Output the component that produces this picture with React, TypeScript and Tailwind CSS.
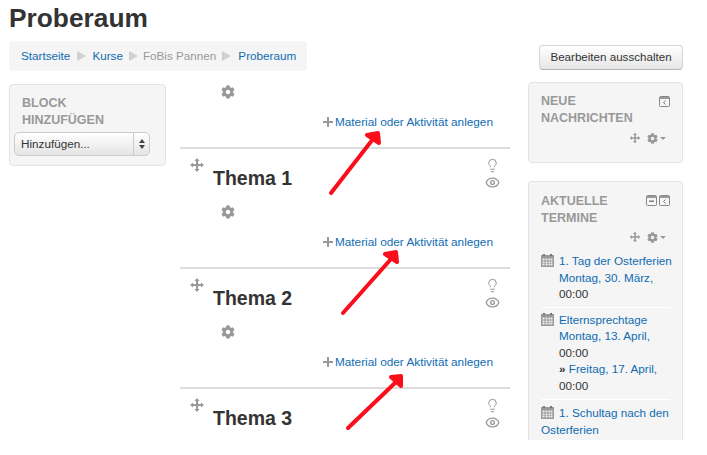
import { Eye, Lightbulb } from 'lucide-react'
import { FaCog } from 'react-icons/fa'

function MoveIcon({ className = '' }: { className?: string }) {
  return (
    <svg viewBox="0 0 14 14" className={`w-[14px] h-[14px] ${className}`} fill="#999">
      <path d="M7 0 9.6 3H8v3h3V4.4L14 7l-3 2.6V8H8v3h1.6L7 14l-2.6-3H6V8H3v1.6L0 7l3-2.6V6h3V3H4.4z" />
    </svg>
  )
}

function PlusIcon() {
  return (
    <svg viewBox="0 0 10 10" className="w-[10px] h-[10px]" fill="#999">
      <path d="M4 0h2v4h4v2H6v4H4V6H0V4h4z" />
    </svg>
  )
}

function CalendarIcon() {
  return (
    <svg viewBox="0 0 13 13" className="w-[13px] h-[13px] shrink-0" fill="none">
      <rect x="0" y="1" width="13" height="12" fill="#999" />
      <rect x="2" y="0" width="2" height="2" fill="#777" />
      <rect x="9" y="0" width="2" height="2" fill="#777" />
      <path d="M1.5 4.5h2v2h-2zM4.5 4.5h2v2h-2zM7.5 4.5h2v2h-2zM10 4.5h1.5v2H10zM1.5 7.5h2v2h-2zM4.5 7.5h2v2h-2zM7.5 7.5h2v2h-2zM10 7.5h1.5v2H10zM1.5 10h2v1.5h-2zM4.5 10h2v1.5h-2zM7.5 10h2v1.5h-2zM10 10h1.5v1.5H10z" fill="#eee" />
    </svg>
  )
}

function DockIcon() {
  return (
    <svg viewBox="0 0 11 11" className="w-[11px] h-[11px]" fill="none">
      <rect x="0.5" y="0.5" width="10" height="10" rx="1" stroke="#888" />
      <rect x="1" y="1" width="9" height="2" fill="#999" />
      <path d="M6.5 4.5 4.5 6.5l2 2" stroke="#777" />
    </svg>
  )
}

function MinusBoxIcon() {
  return (
    <svg viewBox="0 0 11 11" className="w-[11px] h-[11px]" fill="none">
      <rect x="0.5" y="0.5" width="10" height="10" rx="1" stroke="#888" />
      <rect x="1" y="1" width="9" height="2" fill="#999" />
      <rect x="3" y="5.5" width="5" height="1.4" fill="#777" />
    </svg>
  )
}

function AddActivity() {
  return (
    <div className="flex items-center justify-end gap-[2px] pr-[17px] h-[18px]">
      <PlusIcon />
      <a className="text-[11.8px] text-[#0f6cb2] leading-[18px] whitespace-nowrap">Material oder Aktivität anlegen</a>
    </div>
  )
}

function Section({ title, last = false }: { title: string; last?: boolean }) {
  return (
    <section className="border-t-2 border-[#dddddd] h-[120px]">
      <div className="flex justify-between pl-[10px] pr-[10px] pt-[9px]">
        <MoveIcon />
        <div className="flex flex-col items-center gap-[2px]">
          <Lightbulb size={15} strokeWidth={1.6} color="#999" />
          <Eye size={15} strokeWidth={2.2} color="#999" />
        </div>
      </div>
      <h3 className="text-[19.5px] font-bold text-[#333] leading-[24px] pl-[33px] -mt-[24px]">{title}</h3>
      {!last && (
        <>
          <div className="pl-[41px] mt-[15px]">
            <FaCog size={14} color="#999" />
          </div>
          <div className="mt-[14px]">
            <AddActivity />
          </div>
        </>
      )}
    </section>
  )
}

function BlockControls() {
  return (
    <div className="flex justify-end items-center gap-[5px] pr-[4px] mt-[4px]">
      <MoveIcon className="scale-[0.75]" />
      <div className="flex items-center gap-[2px]">
        <FaCog size={11} color="#999" />
        <span className="border-x-[3px] border-t-[3px] border-x-transparent border-t-[#999]" />
      </div>
    </div>
  )
}

export default function App() {
  return (
    <div className="relative w-[707px] h-[455px] overflow-hidden bg-white pl-[9px] pr-[24px] font-['Liberation_Sans',Arial,sans-serif]">
      <h1 className="text-[26.3px] font-bold text-[#333] leading-[36px]">Proberaum</h1>

      <div className="flex justify-between items-start mt-[5px]">
        <nav className="flex items-center w-[298px] h-[30px] px-[12px] bg-[#f5f5f5] rounded-[3px] text-[11.7px] whitespace-nowrap">
          <a className="text-[#0f6cb2]">Startseite</a>
          <span className="ml-[7px] mr-[6px] border-y-[5px] border-l-[9px] border-y-transparent border-l-[#d0d0d0]" />
          <a className="text-[#0f6cb2]">Kurse</a>
          <span className="ml-[6px] mr-[5px] border-y-[5px] border-l-[9px] border-y-transparent border-l-[#d0d0d0]" />
          <span className="text-[#999]">FoBis Pannen</span>
          <span className="ml-[6px] mr-[7px] border-y-[5px] border-l-[9px] border-y-transparent border-l-[#d0d0d0]" />
          <a className="text-[#0f6cb2]">Proberaum</a>
        </nav>
        <button className="w-[144px] h-[25px] mt-[4px] pb-[1px] text-[11.6px] text-[#333] rounded-[4px] border border-[#d5d5d5] border-b-[#b5b5b5] bg-gradient-to-b from-white to-[#e6e6e6] whitespace-nowrap">
          Bearbeiten ausschalten
        </button>
      </div>

      <div className="flex mt-[11px]">
        <aside className="w-[157px] shrink-0 pt-[2px]">
          <div className="h-[82px] bg-[#f5f5f5] border border-[#e3e3e3] rounded-[4px] px-[4px] pt-[10px]">
            <h2 className="text-[12.5px] font-bold text-[#999] uppercase leading-[16.5px] pl-[8px]">Block<br />hinzufügen</h2>
            <div className="flex items-center w-[136px] h-[24px] mt-[4px] rounded-[5px] border border-[#ccc] bg-gradient-to-b from-white to-[#e4e4e4] text-[11.7px] text-[#333]">
              <span className="flex-1 pl-[6px]">Hinzufügen...</span>
              <span className="flex flex-col items-center justify-center gap-[2px] w-[16px] h-full border-l border-[#ccc]">
                <span className="border-x-[3px] border-b-[4px] border-x-transparent border-b-[#444]" />
                <span className="border-x-[3px] border-t-[4px] border-x-transparent border-t-[#444]" />
              </span>
            </div>
          </div>
        </aside>

        <main className="w-[330px] ml-[14px] shrink-0">
          <div className="h-[65px] pt-[3px]">
            <div className="pl-[41px]">
              <FaCog size={14} color="#999" />
            </div>
            <div className="mt-[14px]">
              <AddActivity />
            </div>
          </div>
          <Section title="Thema 1" />
          <Section title="Thema 2" />
          <Section title="Thema 3" last />
        </main>

        <aside className="w-[155px] ml-[18px] shrink-0">
          <div className="h-[81px] bg-[#f5f5f5] border border-[#e3e3e3] rounded-[4px] px-[12px] pt-[10px]">
            <div className="flex justify-between">
              <h2 className="text-[12.5px] font-bold text-[#999] uppercase leading-[16.5px]">Neue<br />Nachrichten</h2>
              <span className="pt-[3px]"><DockIcon /></span>
            </div>
            <div className="pt-[1px]">
              <BlockControls />
            </div>
          </div>

          <div className="h-[259px] mt-[18px] overflow-hidden bg-[#f5f5f5] border-x border-t border-[#e3e3e3] rounded-t-[4px] px-[12px] pt-[11px]">
            <div className="flex justify-between">
              <h2 className="text-[12.5px] font-bold text-[#999] uppercase leading-[16.5px]">Aktuelle<br />Termine</h2>
              <span className="flex gap-[2px] pt-[2px]"><MinusBoxIcon /><DockIcon /></span>
            </div>
            <BlockControls />

            <div className="text-[11.7px] leading-[16.5px] text-[#333] mt-[9px] whitespace-nowrap">
              <div className="border-b border-[#fff] pb-[4px]">
                <div className="flex gap-[5px]">
                  <span className="pt-[1px]"><CalendarIcon /></span>
                  <div>
                    <a className="text-[#0f6cb2]">1. Tag der Osterferien</a>
                    <br />
                    <a className="text-[#0f6cb2]">Montag, 30. März,</a>
                    <br />
                    00:00
                  </div>
                </div>
              </div>
              <div className="border-b border-[#fff] pt-[4px] pb-[5px]">
                <div className="flex gap-[5px]">
                  <span className="pt-[1px]"><CalendarIcon /></span>
                  <div>
                    <a className="text-[#0f6cb2]">Elternsprechtage</a>
                    <br />
                    <a className="text-[#0f6cb2]">Montag, 13. April,</a>
                    <br />
                    00:00
                    <br />
                    <b>»</b> <a className="text-[#0f6cb2]">Freitag, 17. April,</a>
                    <br />
                    00:00
                  </div>
                </div>
              </div>
              <div className="pt-[5px]">
                <span className="inline-block align-[-2px] mr-[5px]"><CalendarIcon /></span>
                <a className="text-[#0f6cb2]">1. Schultag nach den<br />Osterferien</a>
              </div>
            </div>
          </div>
        </aside>
      </div>

      {/* red annotation arrows */}
      <svg viewBox="0 0 707 455" className="absolute inset-0 w-[707px] h-[455px] pointer-events-none">
        <g stroke="#fb0d1b" strokeWidth="4" strokeLinecap="round" fill="#fb0d1b" strokeLinejoin="round">
          <path d="M331 193 373 139" fill="none" />
          <path d="M367 135 378 133 379 143z" />
          <path d="M343 313 391 259" fill="none" />
          <path d="M385 254 396 252 397 262z" />
          <path d="M348 428 396 382" fill="none" />
          <path d="M391 377 401 376 401 386z" />
        </g>
      </svg>
    </div>
  )
}
